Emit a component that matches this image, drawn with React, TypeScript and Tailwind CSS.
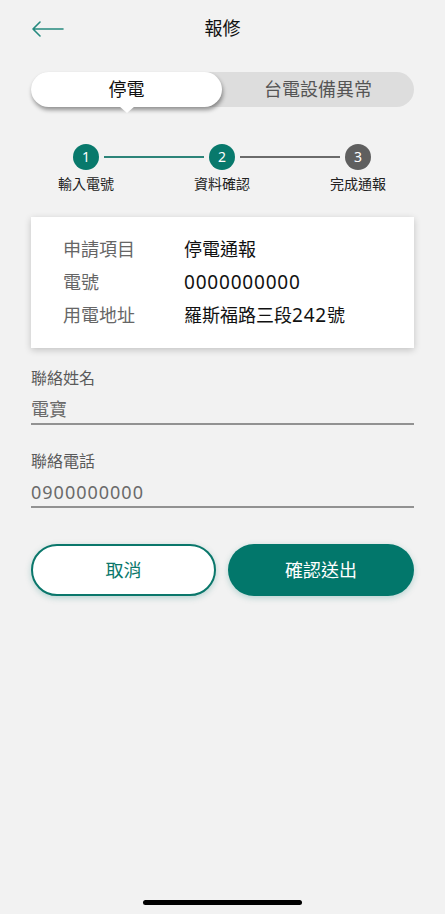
import React from "react";

const font = { fontFamily: '"Noto Sans", "Noto Sans CJK TC", sans-serif' };

const rows = [
  { label: "申請項目", value: "停電通報" },
  { label: "電號", value: "0000000000" },
  { label: "用電地址", value: "羅斯福路三段242號" },
];

const steps = ["輸入電號", "資料確認", "完成通報"];

// the app's digits are set a touch larger and looser than the CJK text around them
function Wide({ text, digits }: { text: string; digits: string }) {
  return (
    <>
      {text.split(/(\d+)/).map((part, i) =>
        /^\d+$/.test(part) ? (
          <span key={i} className={digits}>
            {part}
          </span>
        ) : (
          <span key={i}>{part}</span>
        )
      )}
    </>
  );
}

function Step({ n, active }: { n: number; active: boolean }) {
  return (
    <div
      className={
        "flex h-[26px] w-[26px] shrink-0 items-center justify-center rounded-full text-[14px] leading-none text-white " +
        (active ? "bg-[#08796c]" : "bg-[#5f5f5f]")
      }
    >
      {n}
    </div>
  );
}

function Field({ label, value }: { label: string; value: string }) {
  return (
    <div className="flex flex-col">
      <div className="h-[22px] text-[16px] leading-[22px] text-[#5a5a5a]">{label}</div>
      <div className="mt-[6px] h-[30px] border-b-2 border-[#929292] text-[18px] leading-[28px] text-[#6a6a6a]">
        <Wide text={value} digits="tracking-[1px]" />
      </div>
    </div>
  );
}

export default function App() {
  return (
    <div className="flex h-[914px] w-[445px] flex-col bg-[#f2f2f2]" style={font}>
      {/* header */}
      <div className="relative flex h-[56px] items-center justify-center">
        <svg
          className="absolute left-[31px] top-[21px]"
          width="34"
          height="16"
          viewBox="0 0 34 16"
          fill="none"
          stroke="#268a7f"
          strokeWidth="1.6"
          strokeLinecap="round"
          strokeLinejoin="round"
        >
          <path d="M2 8h30M9 1 2 8l7 7" />
        </svg>
        <span className="text-[18px] text-[#111]">報修</span>
      </div>

      {/* segmented tabs */}
      <div className="mx-[31px] mt-[16px] flex h-[35px] rounded-full bg-[#dddddd]">
        <div className="relative flex w-[191px] items-center justify-center rounded-full bg-white shadow-[1px_3px_4px_rgba(0,0,0,0.4)]">
          <span className="text-[18px] text-[#111]">停電</span>
          <div className="absolute left-1/2 top-[34px] h-0 w-0 -translate-x-1/2 border-l-[8px] border-r-[8px] border-t-[7px] border-l-transparent border-r-transparent border-t-white" />
        </div>
        <div className="flex flex-1 items-center justify-center text-[18px] text-[#555]">台電設備異常</div>
      </div>

      {/* stepper */}
      <div className="ml-[73px] mt-[37px] flex w-[298px] items-center self-start">
        <Step n={1} active />
        <div className="mx-[5px] h-[1.5px] flex-1 bg-[#2d8479]" />
        <Step n={2} active />
        <div className="mx-[5px] h-[1.5px] flex-1 bg-[#6b6b6b]" />
        <Step n={3} active={false} />
      </div>
      <div className="ml-[18px] mt-[5px] flex">
        {steps.map((s) => (
          <div key={s} className="w-[136px] text-center text-[14px] leading-[18px] text-[#222]">
            {s}
          </div>
        ))}
      </div>

      {/* summary card */}
      <div className="mx-[31px] mt-[24px] flex flex-col bg-white py-[16px] pl-[32px] shadow-[0_2px_7px_rgba(0,0,0,0.2)]">
        {rows.map((r) => (
          <div key={r.label} className="flex h-[33px] items-center text-[18px]">
            <span className="w-[121px] text-[#666]">{r.label}</span>
            <span className="text-[#111]">
              <Wide text={r.value} digits="text-[19px] tracking-[0.8px]" />
            </span>
          </div>
        ))}
      </div>

      {/* contact fields */}
      <div className="mx-[31px] mt-[19px] flex flex-col gap-[25px]">
        <Field label="聯絡姓名" value="電寶" />
        <Field label="聯絡電話" value="0900000000" />
      </div>

      {/* actions */}
      <div className="mx-[31px] mt-[36px] flex gap-[12px]">
        <button className="flex h-[52px] w-[185px] items-center justify-center rounded-full border-2 border-[#0a776b] bg-white text-[18px] text-[#0a776b] shadow-[0_2px_6px_rgba(0,120,110,0.25)]">
          取消
        </button>
        <button className="flex h-[52px] flex-1 items-center justify-center rounded-full bg-[#02776b] text-[18px] text-white shadow-[0_2px_6px_rgba(0,120,110,0.25)]">
          確認送出
        </button>
      </div>

      {/* home indicator */}
      <div className="mb-[9px] mt-auto h-[5px] w-[159px] self-center rounded-full bg-black" />
    </div>
  );
}
